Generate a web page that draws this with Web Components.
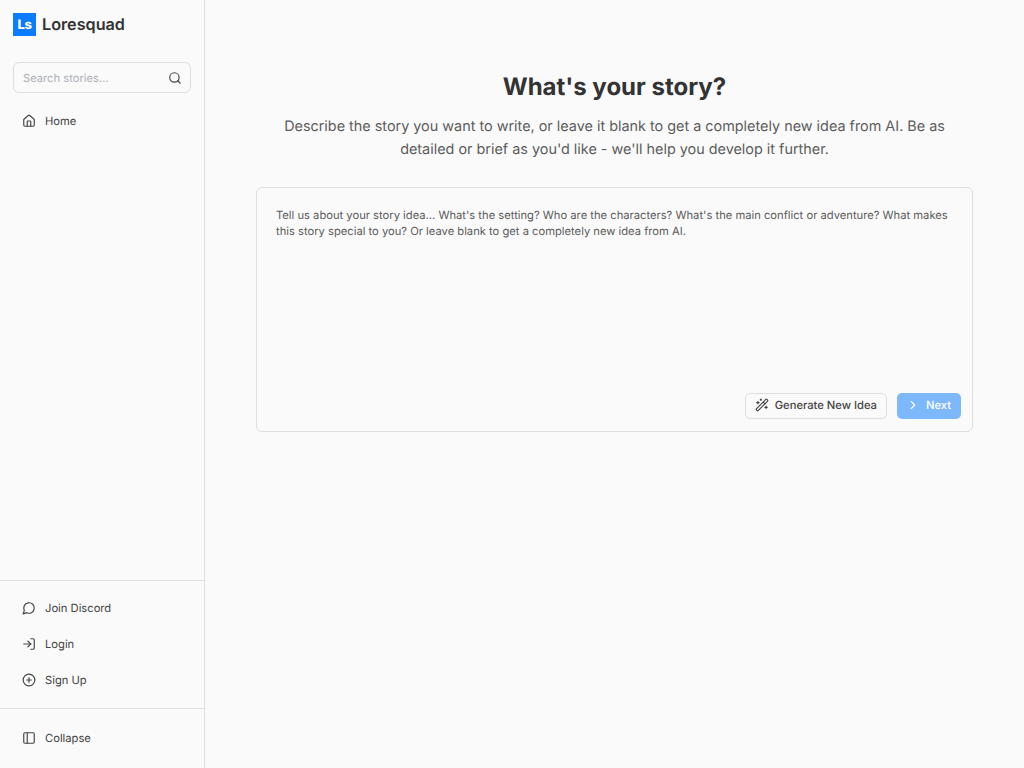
<!DOCTYPE html>
<html>
<head>
<meta charset="utf-8">
<title>Loresquad</title>
<style>
  html, body { margin: 0; height: 100%; }
  body {
    background: #fafafa;
    color: #333;
    font-family: Inter, "Liberation Sans", sans-serif;
    text-rendering: geometricPrecision;
  }
</style>
</head>
<body>
<app-shell>
  <side-bar slot="side"></side-bar>
  <story-prompt></story-prompt>
</app-shell>

<script>
const ICONS = {
  home: '<path d="M15 21v-8a1 1 0 0 0-1-1h-4a1 1 0 0 0-1 1v8"/><path d="M3 10a2 2 0 0 1 .709-1.528l7-5.999a2 2 0 0 1 2.582 0l7 5.999A2 2 0 0 1 21 10v9a2 2 0 0 1-2 2H5a2 2 0 0 1-2-2z"/>',
  search: '<circle cx="11" cy="11" r="8"/><path d="M21 21l-4.3-4.3"/>',
  discord: '<path d="M7.9 20A9 9 0 1 0 4 16.1L2 22Z"/>',
  login: '<path d="M15 3h4a2 2 0 0 1 2 2v14a2 2 0 0 1-2 2h-4"/><path d="M10 17l5-5-5-5"/><path d="M15 12H3"/>',
  plus: '<circle cx="12" cy="12" r="10"/><path d="M8 12h8"/><path d="M12 8v8"/>',
  panel: '<rect x="3" y="3" width="18" height="18" rx="2"/><path d="M9 3v18"/>',
  wand: '<path d="M21.64 3.64l-1.28-1.28a1.21 1.21 0 0 0-1.72 0L2.36 18.64a1.21 1.21 0 0 0 0 1.72l1.28 1.28a1.2 1.2 0 0 0 1.72 0L21.64 5.36a1.2 1.2 0 0 0 0-1.72"/><path d="M14 7l3 3"/><path d="M5 6v4"/><path d="M19 14v4"/><path d="M10 2v2"/><path d="M7 8H3"/><path d="M21 16h-4"/><path d="M11 3H9"/>',
  chevron: '<path d="M9 18l6-6-6-6"/>'
};

function icon(name, size) {
  return `<svg xmlns="http://www.w3.org/2000/svg" width="${size}" height="${size}" viewBox="0 0 24 24" fill="none" stroke="currentColor" stroke-width="2" stroke-linecap="round" stroke-linejoin="round">${ICONS[name]}</svg>`;
}

class AppShell extends HTMLElement {
  constructor() {
    super();
    this.attachShadow({ mode: "open" });
    this.shadowRoot.innerHTML = `
      <style>
        :host {
          display: grid;
          grid-template-columns: 205px 1fr;
          height: 100vh;
        }
      </style>
      <slot name="side"></slot>
      <slot></slot>
    `;
  }
}

class NavItem extends HTMLElement {
  constructor() {
    super();
    this.attachShadow({ mode: "open" });
    this.shadowRoot.innerHTML = `
      <style>
        :host {
          display: flex;
          align-items: center;
          gap: 9px;
          height: 36px;
          padding: 0 9px;
          font-size: 11.2px;
          color: #444;
        }
        svg { display: block; flex: none; }
      </style>
      ${icon(this.getAttribute("icon"), 14)}
      <slot></slot>
    `;
  }
}

class SideBar extends HTMLElement {
  constructor() {
    super();
    this.attachShadow({ mode: "open" });
    this.shadowRoot.innerHTML = `
      <style>
        :host {
          display: flex;
          flex-direction: column;
          height: 100vh;
          box-sizing: border-box;
          border-right: 1px solid #dedede;
        }
        .brand {
          display: flex;
          align-items: center;
          gap: 6px;
          padding: 13px 13px 0;
          height: 23px;
          font-size: 16.2px;
          font-weight: 600;
          color: #333;
        }
        .name { padding-bottom: 1px; }
        .logo {
          width: 23px;
          height: 23px;
          background: #0a7cff;
          color: #fff;
          display: flex;
          align-items: center;
          justify-content: center;
          font-size: 13px;
          font-weight: 800;
          letter-spacing: -0.5px;
        }
        .search {
          display: flex;
          align-items: center;
          justify-content: space-between;
          margin: 26px 13px 0;
          height: 31px;
          box-sizing: border-box;
          padding: 0 8px 0 9px;
          border: 1px solid #dedede;
          border-radius: 6px;
          font-size: 11.2px;
          color: #adb0b8;
        }
        .search svg { color: #444; display: block; }
        .top { padding: 10px 13px 0; flex: 1; }
        .links { border-top: 1px solid #dedede; padding: 9px 13px 10px; }
        .foot { border-top: 1px solid #dedede; padding: 11px 13px 12px; }
      </style>
      <div class="brand"><span class="logo">Ls</span><span class="name">Loresquad</span></div>
      <div class="search"><span>Search stories...</span>${icon("search", 14)}</div>
      <nav class="top"><nav-item icon="home">Home</nav-item></nav>
      <nav class="links">
        <nav-item icon="discord">Join Discord</nav-item>
        <nav-item icon="login">Login</nav-item>
        <nav-item icon="plus">Sign Up</nav-item>
      </nav>
      <div class="foot"><nav-item icon="panel">Collapse</nav-item></div>
    `;
  }
}

class StoryPrompt extends HTMLElement {
  constructor() {
    super();
    this.attachShadow({ mode: "open" });
    this.shadowRoot.innerHTML = `
      <style>
        :host {
          display: block;
          padding: 70px 51px 0;
          box-sizing: border-box;
        }
        h1 {
          margin: 0;
          text-align: center;
          font-size: 24px;
          line-height: 34px;
          font-weight: 700;
          color: #333;
        }
        p {
          margin: 11px auto 0;
          max-width: 672px;
          text-align: center;
          font-size: 14.4px;
          line-height: 23px;
          color: #5c5c5c;
        }
        .card {
          display: flex;
          flex-direction: column;
          justify-content: space-between;
          margin-top: 26px;
          height: 245px;
          box-sizing: border-box;
          padding: 19px 11px 12px 19px;
          border: 1px solid #dedede;
          border-radius: 6px;
        }
        .hint {
          font-size: 11.2px;
          line-height: 16px;
          color: #5c5c5c;
          padding-right: 6px;
        }
        .actions { display: flex; justify-content: flex-end; gap: 10px; }
        .btn {
          display: flex;
          align-items: center;
          height: 26px;
          box-sizing: border-box;
          border-radius: 5px;
          font-size: 11.2px;
          font-weight: 500;
        }
        .ghost {
          gap: 6px;
          padding: 0 9px 2px;
          border: 1px solid #dedede;
          color: #444;
        }
        .primary {
          gap: 6px;
          padding: 0 10px 2px 9px;
          background: #7cb8fb;
          color: #fff;
        }
        svg { display: block; }
      </style>
      <h1>What's your story?</h1>
      <p>Describe the story you want to write, or leave it blank to get a completely new idea from AI. Be as detailed or brief as you'd like - we'll help you develop it further.</p>
      <div class="card">
        <div class="hint">Tell us about your story idea... What's the setting? Who are the characters? What's the main conflict or adventure? What makes this story special to you? Or leave blank to get a completely new idea from AI.</div>
        <div class="actions">
          <div class="btn ghost">${icon("wand", 14)}Generate New Idea</div>
          <div class="btn primary">${icon("chevron", 14)}Next</div>
        </div>
      </div>
    `;
  }
}

customElements.define("app-shell", AppShell);
customElements.define("nav-item", NavItem);
customElements.define("side-bar", SideBar);
customElements.define("story-prompt", StoryPrompt);
</script>
</body>
</html>
